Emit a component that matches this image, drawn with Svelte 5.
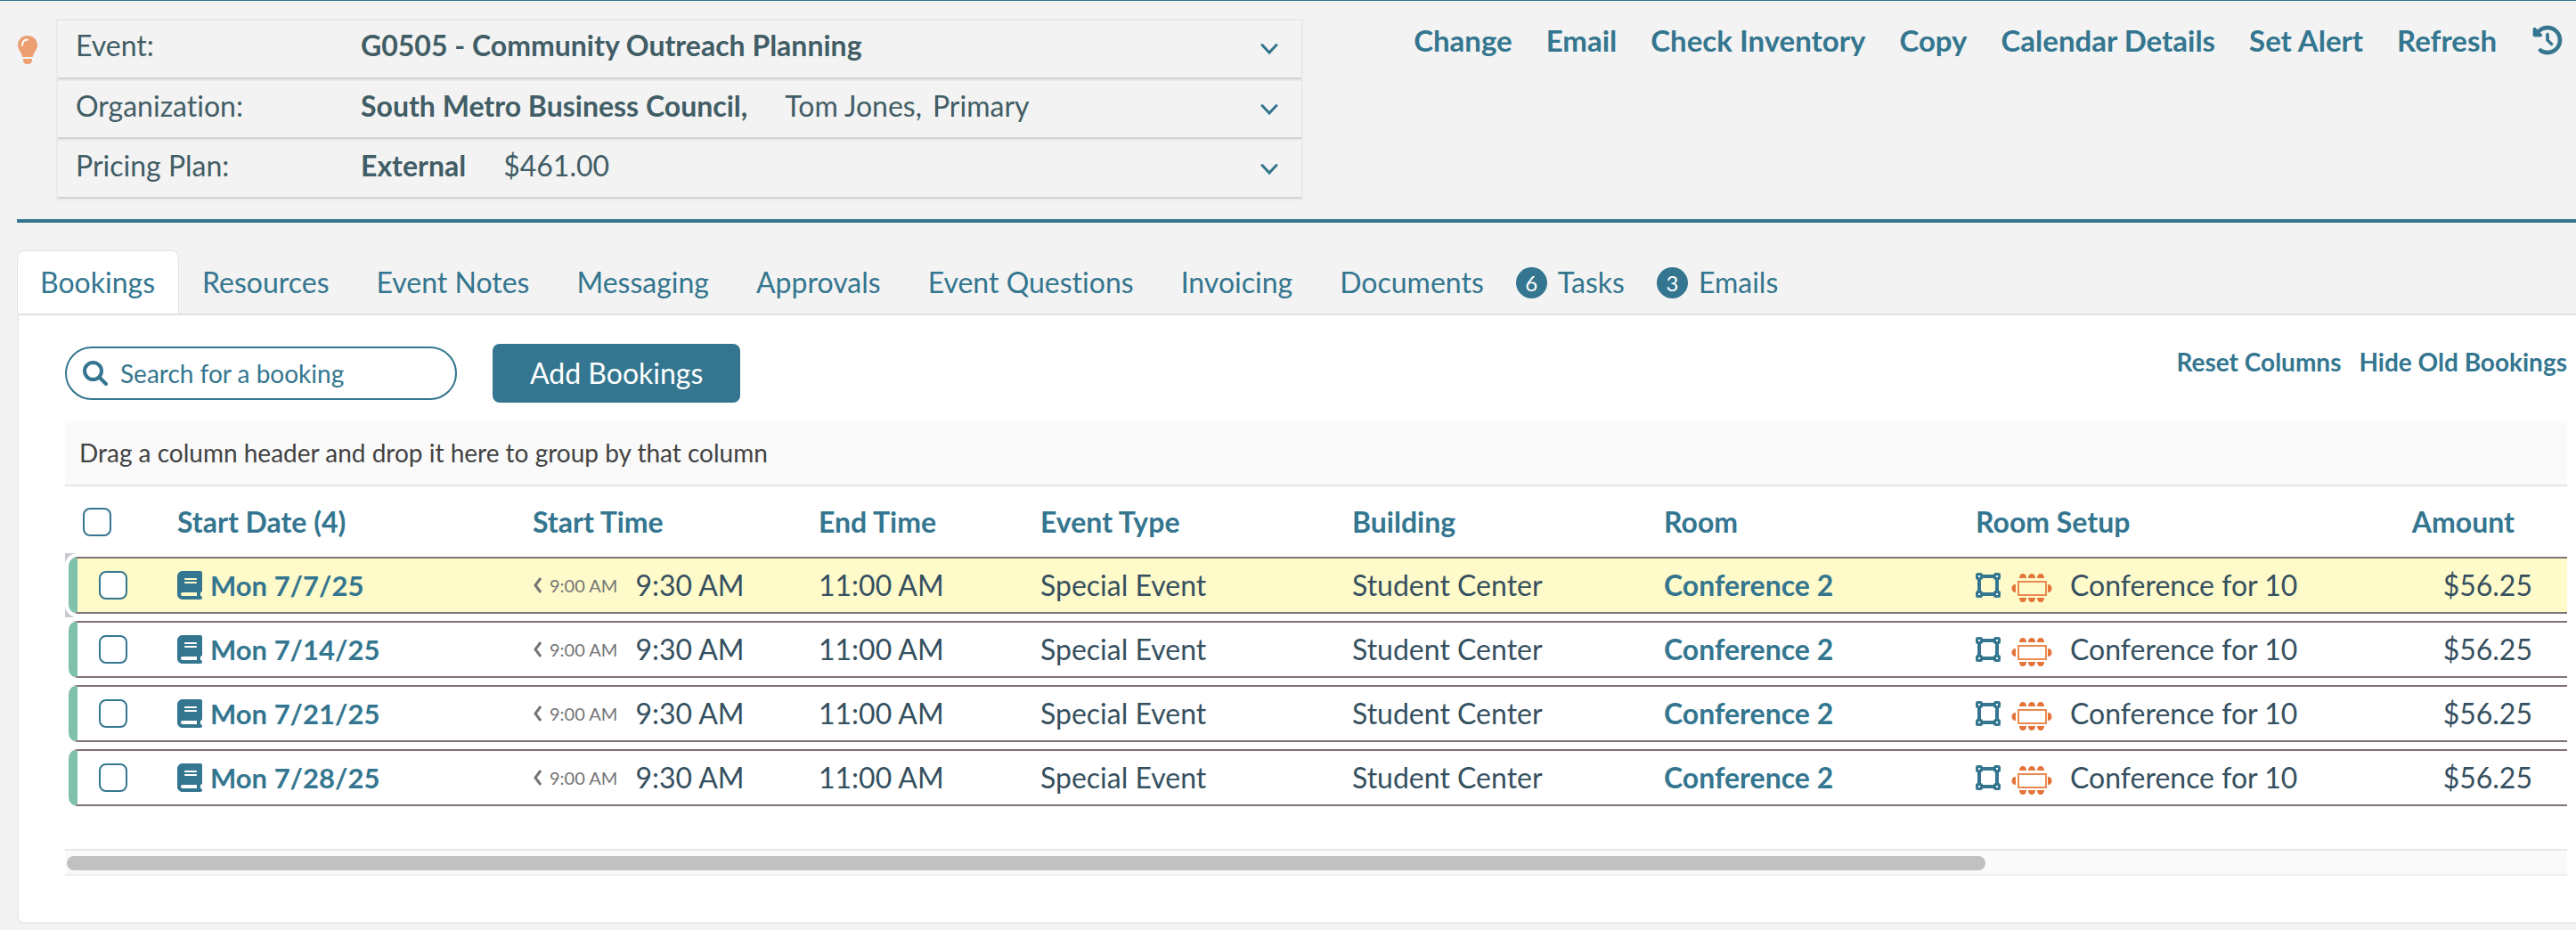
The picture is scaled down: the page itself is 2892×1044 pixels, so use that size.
<script lang="ts">
  interface Tab {
    label: string
    count?: number
  }

  interface Booking {
    date: string
    setupTime: string
    start: string
    end: string
    type: string
    building: string
    room: string
    setup: string
    amount: string
  }

  const actions = ['Change', 'Email', 'Check Inventory', 'Copy', 'Calendar Details', 'Set Alert', 'Refresh']

  const tabs: Tab[] = [
    { label: 'Bookings' },
    { label: 'Resources' },
    { label: 'Event Notes' },
    { label: 'Messaging' },
    { label: 'Approvals' },
    { label: 'Event Questions' },
    { label: 'Invoicing' },
    { label: 'Documents' },
    { label: 'Tasks', count: 6 },
    { label: 'Emails', count: 3 },
  ]

  const dates = ['Mon 7/7/25', 'Mon 7/14/25', 'Mon 7/21/25', 'Mon 7/28/25']

  const bookings: Booking[] = dates.map((date) => ({
    date,
    setupTime: '9:00 AM',
    start: '9:30 AM',
    end: '11:00 AM',
    type: 'Special Event',
    building: 'Student Center',
    room: 'Conference 2',
    setup: 'Conference for 10',
    amount: '$56.25',
  }))

  let activeTab = $state('Bookings')
  let search = $state('')
  let current = $state(0)
  let checked = $state(dates.map(() => false))
  let allChecked = $derived(checked.every(Boolean))

  function toggleAll() {
    const next = !allChecked
    checked = checked.map(() => next)
  }
</script>

{#snippet chevron()}
  <svg class="chevron" viewBox="0 0 20 14" aria-hidden="true">
    <path d="M2 2.5l8 8.5 8-8.5" />
  </svg>
{/snippet}

<div class="page">
  <header class="header">
    <svg class="bulb" viewBox="0 0 24 34" aria-hidden="true">
      <path
        fill="#ec9f70"
        d="M12 1C5.600 1 1 5.800 1 11.500c0 3.200 1.400 5.400 3 7.900 1.200 1.900 2 3.600 2.300 5.600h11.400c.3-2 1.100-3.700 2.300-5.600 1.600-2.500 3-4.700 3-7.900C23 5.800 18.400 1 12 1zM7 27v1.500C7 31.500 9 33 12 33s5-1.500 5-4.500V27z"
      />
      <path d="M6 12c0-4 2.500-6.300 6-6.500" fill="none" stroke="#fff" stroke-width="2" stroke-linecap="round" />
    </svg>

    <div class="info">
      <div class="info-row">
        <span class="info-label">Event:</span>
        <strong>G0505 - Community Outreach Planning</strong>
        <button type="button" class="expand" aria-label="Expand event">{@render chevron()}</button>
      </div>
      <div class="info-row">
        <span class="info-label">Organization:</span>
        <strong>South Metro Business Council,</strong>
        <span class="info-extra">Tom Jones,</span>
        <span class="info-role">Primary</span>
        <button type="button" class="expand" aria-label="Expand organization">{@render chevron()}</button>
      </div>
      <div class="info-row">
        <span class="info-label">Pricing Plan:</span>
        <strong>External</strong>
        <span class="info-extra">$461.00</span>
        <button type="button" class="expand" aria-label="Expand pricing plan">{@render chevron()}</button>
      </div>
    </div>

    <div class="actions">
      {#each actions as action}
        <button type="button" class="link">{action}</button>
      {/each}
      <button type="button" class="link history" aria-label="History">
        <svg viewBox="0 0 512 512" aria-hidden="true">
          <path
            fill="currentColor"
            stroke="currentColor"
            stroke-width="12"
            d="M75 75L41 41C25.900 25.900 0 36.600 0 57.900V168c0 13.300 10.700 24 24 24h110.100c21.400 0 32.100-25.900 17-41l-30.800-30.800C155 85.500 203 64 256 64c106 0 192 86 192 192s-86 192-192 192c-40.800 0-78.600-12.700-109.700-34.400-14.500-10.100-34.400-6.600-44.600 7.900s-6.600 34.400 7.900 44.600C151.200 495 201.700 512 256 512c141.400 0 256-114.600 256-256S397.400 0 256 0C185.300 0 121.300 28.700 75 75zm181 53c-13.300 0-24 10.700-24 24v104c0 6.400 2.500 12.500 7 17l72 72c9.400 9.400 24.600 9.400 33.900 0s9.400-24.600 0-33.900l-65-65V152c0-13.300-10.700-24-24-24z"
          />
        </svg>
      </button>
    </div>
  </header>

  <main class="content">
    <nav class="tabs" aria-label="Event sections">
      {#each tabs as tab}
        <button
          type="button"
          class="tab"
          class:tab--active={activeTab === tab.label}
          class:tab--count={tab.count}
          onclick={() => (activeTab = tab.label)}
        >
          {#if tab.count}<span class="count">{tab.count}</span>{/if}
          {tab.label}
        </button>
      {/each}
    </nav>

    <section class="panel">
      <div class="toolbar">
        <label class="search">
          <svg viewBox="0 0 28 28" aria-hidden="true">
            <circle cx="11.500" cy="11.500" r="9.500" />
            <path d="M18.500 18.500l7.500 7.500" />
          </svg>
          <input type="text" placeholder="Search for a booking" aria-label="Search for a booking" bind:value={search} />
        </label>
        <button type="button" class="add">Add Bookings</button>
        <div class="grid-links">
          <button type="button" class="link">Reset Columns</button>
          <button type="button" class="link">Hide Old Bookings</button>
        </div>
      </div>

      <div class="group-drop">Drag a column header and drop it here to group by that column</div>

      <div class="grid">
        <table>
          <colgroup>
            <col class="col-check" />
            <col class="col-date" />
            <col class="col-start" />
            <col class="col-end" />
            <col class="col-wide" />
            <col class="col-wide" />
            <col class="col-wide" />
            <col class="col-wide" />
            <col />
          </colgroup>
          <thead>
            <tr>
              <th class="check">
                <input type="checkbox" aria-label="Select all bookings" checked={allChecked} onchange={toggleAll} />
              </th>
              <th>Start Date (4)</th>
              <th>Start Time</th>
              <th>End Time</th>
              <th>Event Type</th>
              <th>Building</th>
              <th>Room</th>
              <th>Room Setup</th>
              <th class="amount">Amount</th>
            </tr>
          </thead>
          <tbody>
            {#each bookings as booking, i}
              <tr class:current={current === i} onclick={() => (current = i)}>
                <td class="check">
                  <input type="checkbox" aria-label="Select {booking.date}" bind:checked={checked[i]} />
                </td>
                <td>
                  <a class="date" href="#booking-{i}">
                    <svg class="book" viewBox="0 0 448 512" aria-hidden="true">
                      <path
                        fill="currentColor"
                        d="M96 0C43 0 0 43 0 96v320c0 53 43 96 96 96h320c17.700 0 32-14.300 32-32s-14.300-32-32-32v-64c17.700 0 32-14.300 32-32V32c0-17.700-14.300-32-32-32H96zm0 384h256v64H96c-17.700 0-32-14.300-32-32s14.300-32 32-32zm32-240c0-8.800 7.200-16 16-16h192c8.800 0 16 7.200 16 16s-7.200 16-16 16H144c-8.800 0-16-7.200-16-16zm16 48h192c8.800 0 16 7.200 16 16s-7.200 16-16 16H144c-8.800 0-16-7.200-16-16s7.200-16 16-16z"
                      />
                    </svg>
                    {booking.date}
                  </a>
                </td>
                <td>
                  <div class="time">
                    <span class="setup-time">
                      <svg viewBox="0 0 11 18" aria-hidden="true"><path d="M9 1L3 9l6 8" /></svg>
                      {booking.setupTime}
                    </span>
                    {booking.start}
                  </div>
                </td>
                <td>{booking.end}</td>
                <td>{booking.type}</td>
                <td>{booking.building}</td>
                <td><a href="#room-{i}">{booking.room}</a></td>
                <td>
                  <div class="setup">
                    <svg class="frame" viewBox="0 0 28 28" aria-hidden="true">
                      <path d="M4 4h20v20H4z" />
                      {#each [4, 24] as x}
                        {#each [4, 24] as y}
                          <rect x={x - 2.5} y={y - 2.5} width="5" height="5" rx="1" />
                        {/each}
                      {/each}
                    </svg>
                    <svg class="seats" viewBox="0 -5 46 39" aria-hidden="true">
                      <rect x="8" y="10" width="31" height="15" fill="none" stroke="#e98a50" stroke-width="2" />
                      {#each [9, 19, 29] as x}
                        <path d="M{x} 6c0-3 1.500-5 4-5s4 2 4 5z" />
                        <path d="M{x} 28c0 3 1.500 5 4 5s4-2 4-5z" />
                      {/each}
                      <path d="M5 13c-3 0-4.500 2-4.500 4.500S2 22 5 22z" />
                      <path d="M41 13c3 0 4.500 2 4.500 4.500S44 22 41 22z" />
                    </svg>
                    {booking.setup}
                  </div>
                </td>
                <td class="amount">{booking.amount}</td>
              </tr>
            {/each}
          </tbody>
        </table>
      </div>

      <div class="scrollbar">
        <div class="thumb"></div>
      </div>
    </section>
  </main>
</div>

<style>
  :global(body) {
    margin: 0;
    background: #f3f3f3;
  }

  .page {
    --teal: #34768f;
    border-top: 1px solid var(--teal);
    padding: 20px 0 8px 19px;
    font-family: Lato, sans-serif;
    font-size: 32px;
    font-variant-ligatures: none;
    line-height: 40px;
    color: #415d65;
    overflow: hidden;
  }

  button {
    border: 0;
    padding: 0;
    background: none;
    font: inherit;
    color: var(--teal);
    cursor: pointer;
  }

  .header {
    display: flex;
    align-items: flex-start;
    padding-bottom: 21px;
    border-bottom: 4px solid var(--teal);
  }

  .bulb {
    flex: none;
    width: 24px;
    height: 34px;
    margin: 18px 20px 0 0;
  }

  .info {
    width: 1396px;
    border: 2px solid #e9e9e9;
  }

  .info-row {
    display: flex;
    align-items: center;
    box-sizing: border-box;
    height: 66px;
    padding: 0 26px 8px 20px;
    border-bottom: 2px solid #d2d2d2;
  }

  .info-row + .info-row {
    height: 67px;
    border-top: 2px solid #e9e9e9;
  }

  .info-label {
    width: 320px;
  }

  .info-extra {
    margin-left: 42px;
  }

  .info-role {
    margin-left: 12px;
  }

  .expand {
    display: flex;
    align-items: center;
    margin-left: auto;
    padding-top: 8px;
  }

  .chevron {
    width: 20px;
    height: 14px;
  }

  .chevron path {
    fill: none;
    stroke: currentColor;
    stroke-width: 3;
    stroke-linecap: round;
  }

  .actions {
    display: flex;
    align-items: center;
    gap: 38px;
    margin-left: auto;
    padding: 4px 16px 0 0;
    font-size: 33px;
  }

  .link {
    font-weight: 700;
    white-space: nowrap;
  }

  .history {
    padding-left: 3px;
  }

  .history svg {
    display: block;
    width: 32px;
    height: 32px;
    overflow: visible;
  }

  .content {
    padding-top: 31px;
  }

  .tabs {
    display: flex;
  }

  .tab {
    display: flex;
    align-items: center;
    height: 71px;
    padding: 0 26px 0 25px;
    border: 1px solid transparent;
    border-bottom: 0;
    border-radius: 8px 8px 0 0;
    white-space: nowrap;
  }

  .tab--active {
    background: #fff;
    border-color: #e4e4e4;
  }

  .tab--count {
    padding-left: 8px;
  }

  .count {
    width: 35px;
    height: 35px;
    margin-right: 12px;
    border-radius: 50%;
    background: var(--teal);
    color: #fff;
    font-size: 24px;
    line-height: 35px;
  }

  .panel {
    padding: 32px 10px 52px 52px;
    background: #fff;
    border: 2px solid #ebebeb;
    border-top-color: #e0e0e0;
    border-right: 0;
    border-radius: 0 0 0 8px;
  }

  .toolbar {
    display: flex;
    align-items: center;
    gap: 40px;
    margin-bottom: 20px;
  }

  .search {
    display: flex;
    align-items: center;
    gap: 14px;
    box-sizing: border-box;
    width: 440px;
    height: 60px;
    padding: 0 18px;
    border: 2px solid var(--teal);
    border-radius: 30px;
  }

  .search svg {
    flex: none;
    width: 28px;
    height: 28px;
    fill: none;
    stroke: var(--teal);
    stroke-width: 4;
    stroke-linecap: round;
  }

  .search input {
    flex: 1;
    min-width: 0;
    border: 0;
    padding: 0;
    outline: none;
    background: none;
    font: inherit;
    font-size: 28px;
    color: var(--teal);
  }

  .search input::placeholder {
    color: var(--teal);
    opacity: 1;
  }

  .add {
    height: 66px;
    padding: 0 42px;
    border-radius: 8px;
    background: var(--teal);
    color: #fff;
  }

  .grid-links {
    display: flex;
    align-self: flex-start;
    gap: 20px;
    margin-left: auto;
    font-size: 28px;
  }

  .group-drop {
    padding: 16px;
    background: #fafafa;
    border-bottom: 2px solid #e4e4e4;
    font-size: 28px;
    color: #424242;
  }

  .grid {
    padding-left: 4px;
    overflow: hidden;
  }

  table {
    width: 100%;
    table-layout: fixed;
    border-collapse: separate;
    border-spacing: 0 8px;
    isolation: isolate;
  }

  .col-check {
    width: 122px;
  }

  .col-date {
    width: 399px;
  }

  .col-start {
    width: 321px;
  }

  .col-end {
    width: 249px;
  }

  .col-wide {
    width: 350px;
  }

  th,
  td {
    height: 60px;
    padding: 0;
    text-align: left;
    white-space: nowrap;
  }

  th {
    height: 63px;
    font-weight: 700;
    color: var(--teal);
  }

  td {
    border: 2px solid #7e7172;
    border-width: 2px 0;
    background: #fff;
    color: #35505f;
  }

  th.check {
    padding-left: 16px;
  }

  td.check {
    position: relative;
    padding-left: 24px;
    border-left: 10px solid #7fc1aa;
    border-radius: 10px 0 0 10px;
  }

  .current td {
    background: #fffac9;
  }

  /* grey corners behind the current row, cut by a white rounded frame */
  .current td.check::before,
  .current td.check::after {
    content: '';
    position: absolute;
    z-index: -1;
    top: -6px;
    bottom: -6px;
    left: -14px;
    width: 10px;
    background: #c8c8cf;
  }

  .current td.check::after {
    width: 40px;
    border-radius: 14px 0 0 14px;
    background: #fff;
  }

  input[type='checkbox'] {
    appearance: none;
    display: block;
    box-sizing: border-box;
    width: 32px;
    height: 32px;
    margin: 0;
    border: 2px solid var(--teal);
    border-radius: 8px;
    background: #fff;
  }

  input[type='checkbox']:checked {
    background: var(--teal);
  }

  th.amount,
  td.amount {
    padding-right: 39px;
    text-align: right;
  }

  th.amount {
    padding-right: 59px;
  }

  a {
    color: var(--teal);
    font-weight: 700;
    text-decoration: none;
  }

  .date,
  .time,
  .setup {
    display: flex;
    align-items: center;
  }

  .date {
    font-size: 31px;
  }

  .book {
    flex: none;
    width: 28px;
    height: 32px;
    margin-right: 9px;
  }

  .setup-time {
    display: flex;
    align-items: center;
    gap: 8px;
    margin-right: 20px;
    font-size: 20px;
    color: #757575;
  }

  .setup-time svg {
    width: 11px;
    height: 18px;
    fill: none;
    stroke: currentColor;
    stroke-width: 3;
  }

  .frame {
    flex: none;
    width: 28px;
    height: 28px;
    margin-right: 12px;
    fill: none;
    stroke: var(--teal);
    stroke-width: 4;
  }

  .frame rect {
    stroke-width: 3;
    fill: #fff;
  }

  .seats {
    flex: none;
    width: 46px;
    height: 39px;
    margin-right: 20px;
    fill: #e4743a;
  }

  .scrollbar {
    margin-top: 40px;
    padding: 6px 2px 4px;
    background: #fafafa;
    border-top: 2px solid #e6e6e6;
    border-bottom: 2px solid #ededed;
  }

  .thumb {
    width: 76.8%;
    height: 16px;
    border-radius: 8px;
    background: #c1c1c1;
  }
</style>
